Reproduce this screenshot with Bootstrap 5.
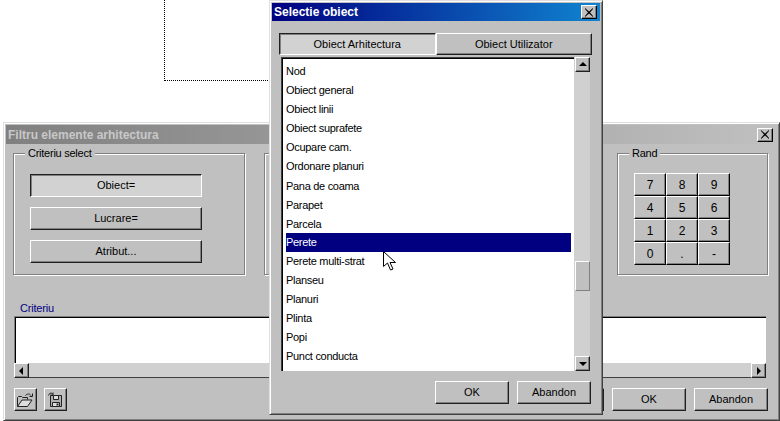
<!DOCTYPE html>
<html lang="en">
<head>
    <meta charset="UTF-8">
    <meta name="viewport" content="width=device-width, initial-scale=1.0">
    <title>Selectie obiect</title>
    <link href="https://cdn.jsdelivr.net/npm/bootstrap@5.3.0/dist/css/bootstrap.min.css" rel="stylesheet">
    <style>
    body {
        background: #fff;
        width: 780px;
        height: 421px;
        overflow: hidden;
        font-family: "Liberation Sans", Arial, sans-serif;
        font-size: 11px;
        color: #000;
    }
    .desk { width: 780px; height: 421px; }
    /* windows sit on a free canvas */
    .win {
        position: absolute;
        background: #c0c0c0;
        border: 1px solid;
        border-color: #dfdfdf #404040 #404040 #dfdfdf;
        box-shadow: inset 1px 1px 0 #fff, inset -1px -1px 0 #808080;
        padding: 2px;
    }
    .win-back { left: 3px; top: 122px; width: 777px; height: 299px; }
    .win-front { left: 269px; top: 0; width: 334px; height: 415px; }
    .dotted-box {
        position: absolute;
        left: 164px;
        top: -2px;
        width: 120px;
        height: 83px;
        border: 1px dotted #000;
    }
    .title-bar {
        height: 18px;
        padding: 0 3px 0 2px;
        font-size: 12px;
        font-weight: 700;
    }
    .win-back .title-bar { height: 19px; padding-right: 4px; background: linear-gradient(to right, #808080, #c0c0c0); color: #c8c8c8; }
    .win-front .title-bar { background: linear-gradient(to right, #000080, #1084d0); color: #fff; }
    .close-x {
        width: 16px;
        height: 14px;
        background: #c0c0c0;
        border: 1px solid;
        border-color: #fff #000 #000 #fff;
        box-shadow: inset -1px -1px 0 #808080;
    }
    .w-btn, .w-btn:hover, .w-btn:focus {
        border-radius: 0;
        padding: 0;
        font-family: "Liberation Sans", Arial, sans-serif;
        font-size: 11px;
        color: #000;
        background: #c0c0c0;
        border: 1px solid;
        border-color: #fff #202020 #202020 #fff;
        box-shadow: inset -1px -1px 0 #808080;
        height: 23px;
    }
    .w-btn.is-down {
        background: #d2d2d2;
        border-color: #202020 #fff #fff #202020;
        box-shadow: inset 1px 1px 0 #808080;
    }
    .btn-wide { width: 172px; }
    .btn-act { width: 74px; }
    .btn-ico { width: 23px; }
    .back-body { padding: 9px 8px 0 7px; }
    .grp {
        position: relative;
        height: 122px;
        border: 1px solid #808080;
        box-shadow: 1px 1px 0 #fff, inset 1px 1px 0 #fff;
    }
    .grp-sel { width: 232px; padding: 20px 0 0 16px; gap: 10px; }
    .grp-mid { width: 334px; margin-left: 19px; }
    .grp-rand { width: 151px; margin-left: auto; margin-right: 1px; padding: 19px 0 0 16px; }
    .grp-label {
        position: absolute;
        top: -8px;
        left: 11px;
        padding: 0 3px;
        background: #c0c0c0;
        font-size: 11px;
        line-height: 14px;
        letter-spacing: -.25px;
    }
    .keypad {
        display: grid;
        grid-template-columns: repeat(3, 32px);
        grid-auto-rows: 23px;
    }
    .keypad .w-btn { width: 32px; font-size: 12px; border-color: #fff #000 #000 #fff; }
    .crit-label { color: #000080; line-height: 14px; margin: 26px 0 1px 14px; font-size: 11px; letter-spacing: -.2px; }
    .crit-wrap { margin: 0 11px 0 8px; }
    .crit-box {
        height: 47px;
        background: #fff;
        border-top: 1px solid #808080;
        border-left: 1px solid #808080;
        box-shadow: inset 1px 1px 0 #000;
    }
    .sb-h { height: 15px; background: #d0d0d0; border-bottom: 1px solid #404040; }
    .sb-btn {
        width: 15px;
        height: 15px;
        background: #c0c0c0;
        border: 1px solid;
        border-color: #fff #202020 #202020 #fff;
        box-shadow: inset -1px -1px 0 #808080;
    }
    .back-foot { margin-top: 10px; padding: 0 9px 0 8px; gap: 7px; }
    .act-set { gap: 8px; }
    .front-body { padding: 12px 9px 0 7px; }
    .tab-row { margin-right: -1px; }
    .tab-row .w-btn { width: 157px; height: 22px; }
    .pick-wrap { margin: 2px 0 0 2px; height: 314px; }
    .pick-list {
        width: 293px;
        padding: 4px 3px 0 4px;
        border-radius: 0;
        overflow: hidden;
        background: #fff;
        border-top: 1px solid #404040;
        border-left: 1px solid #404040;
        box-shadow: inset 1px 1px 0 #000;
    }
    .pick-list .list-group-item {
        height: 19.1px;
        flex: none;
        padding: 0;
        line-height: 19px;
        border: 0;
        border-radius: 0;
        background: transparent;
        font-size: 11px;
        letter-spacing: -.3px;
        color: #000;
        white-space: nowrap;
    }
    .pick-list .list-group-item.active { background: #000080; color: #fff; }
    .sb-v { width: 16px; background: #d0d0d0; padding-left: 1px; }
    .sb-gap { height: 189px; }
    .sb-thumb {
        width: 15px;
        height: 30px;
        background: #c0c0c0;
        border: 1px solid;
        border-color: #fff #808080 #808080 #fff;
    }
    .front-foot { margin-top: 10px; }
    .arrow-pt {
        position: absolute;
        left: 383px;
        top: 251px;
    }
    </style>
</head>
<body>
<div class="desk position-relative">
    <div class="dotted-box"></div>

    <!-- back window -->
    <div class="win win-back d-flex flex-column">
        <div class="title-bar d-flex align-items-center justify-content-between">
            <span>Filtru elemente arhitectura</span>
            <span class="close-x d-flex align-items-center justify-content-center">
                <svg width="10" height="9" viewBox="0 0 10 9"><path d="M1 0l4 3.500L9 0v1L6 4.500 9 8v1L5 5.500 1 9V8l3-3.500L1 1z" fill="#000"/></svg>
            </span>
        </div>
        <div class="back-body d-flex">
            <div class="grp grp-sel d-flex flex-column">
                <span class="grp-label">Criteriu select</span>
                <button class="btn w-btn btn-wide is-down">Obiect=</button>
                <button class="btn w-btn btn-wide">Lucrare=</button>
                <button class="btn w-btn btn-wide">Atribut...</button>
            </div>
            <div class="grp grp-mid"></div>
            <div class="grp grp-rand">
                <span class="grp-label">Rand</span>
                <div class="keypad">
                    <button class="btn w-btn">7</button><button class="btn w-btn">8</button><button class="btn w-btn">9</button>
                    <button class="btn w-btn">4</button><button class="btn w-btn">5</button><button class="btn w-btn">6</button>
                    <button class="btn w-btn">1</button><button class="btn w-btn">2</button><button class="btn w-btn">3</button>
                    <button class="btn w-btn">0</button><button class="btn w-btn">.</button><button class="btn w-btn">-</button>
                </div>
            </div>
        </div>
        <div class="crit-label">Criteriu</div>
        <div class="crit-wrap">
            <div class="crit-box"></div>
            <div class="sb-h d-flex justify-content-between">
                <span class="sb-btn d-flex align-items-center justify-content-center">
                    <svg width="5" height="8" viewBox="0 0 5 8"><path d="M4 0v8L0 4z" fill="#000"/></svg>
                </span>
                <span class="sb-btn d-flex align-items-center justify-content-center">
                    <svg width="5" height="8" viewBox="0 0 5 8"><path d="M1 0v8l4-4z" fill="#000"/></svg>
                </span>
            </div>
        </div>
        <div class="back-foot d-flex align-items-center">
            <button class="btn w-btn btn-ico d-flex align-items-center justify-content-center">
                <svg width="17" height="14" viewBox="0 0 17 14" fill="none" stroke="#222">
                    <path d="M.500 13.500V4.500l1-1h3l1 1h5v2"/>
                    <path d="M.500 13.500h10l4.500-6.500H5z" fill="#dedede"/>
                    <path d="M8.500 2.500c2-2 4-2 5.500 0M15.500 .5v3H12.500"/>
                </svg>
            </button>
            <button class="btn w-btn btn-ico d-flex align-items-center justify-content-center">
                <svg width="15" height="16" viewBox="0 0 15 16" fill="none" stroke="#222">
                    <path d="M.500 3.500c.5-2 2-3 4-2M5 .5v2.500H2.500"/>
                    <path d="M2.500 3.500h11v11h-11z" fill="#b0b0b0"/>
                    <path d="M5.500 3.500h5v4h-5z" fill="#dedede"/>
                    <path d="M4.500 14.500v-4h7v4z" fill="#dedede"/>
                    <path d="M9.500 11.500v2" stroke-width="2"/>
                </svg>
            </button>
            <div class="act-set ms-auto d-flex">
                <button class="btn w-btn btn-act"></button>
                <button class="btn w-btn btn-act">OK</button>
                <button class="btn w-btn btn-act">Abandon</button>
            </div>
        </div>
    </div>

    <!-- front dialog -->
    <div class="win win-front d-flex flex-column">
        <div class="title-bar d-flex align-items-center justify-content-between">
            <span>Selectie obiect</span>
            <span class="close-x d-flex align-items-center justify-content-center">
                <svg width="10" height="9" viewBox="0 0 10 9"><path d="M1 0l4 3.500L9 0v1L6 4.500 9 8v1L5 5.500 1 9V8l3-3.500L1 1z" fill="#000"/></svg>
            </span>
        </div>
        <div class="front-body d-flex flex-column">
            <div class="tab-row d-flex">
                <button class="btn w-btn is-down">Obiect Arhitectura</button>
                <button class="btn w-btn">Obiect Utilizator</button>
            </div>
            <div class="pick-wrap d-flex">
                <ul class="list-group pick-list">
                    <li class="list-group-item">Nod</li>
                    <li class="list-group-item">Obiect general</li>
                    <li class="list-group-item">Obiect linii</li>
                    <li class="list-group-item">Obiect suprafete</li>
                    <li class="list-group-item">Ocupare cam.</li>
                    <li class="list-group-item">Ordonare planuri</li>
                    <li class="list-group-item">Pana de coama</li>
                    <li class="list-group-item">Parapet</li>
                    <li class="list-group-item">Parcela</li>
                    <li class="list-group-item active">Perete</li>
                    <li class="list-group-item">Perete multi-strat</li>
                    <li class="list-group-item">Planseu</li>
                    <li class="list-group-item">Planuri</li>
                    <li class="list-group-item">Plinta</li>
                    <li class="list-group-item">Popi</li>
                    <li class="list-group-item">Punct conducta</li>
                </ul>
                <div class="sb-v d-flex flex-column">
                    <span class="sb-btn d-flex align-items-center justify-content-center">
                        <svg width="8" height="5" viewBox="0 0 8 5"><path d="M0 4h8L4 0z" fill="#000"/></svg>
                    </span>
                    <div class="sb-gap"></div>
                    <div class="sb-thumb"></div>
                    <span class="sb-btn d-flex align-items-center justify-content-center mt-auto">
                        <svg width="8" height="5" viewBox="0 0 8 5"><path d="M0 1h8L4 5z" fill="#000"/></svg>
                    </span>
                </div>
            </div>
            <div class="front-foot act-set d-flex justify-content-end">
                <button class="btn w-btn btn-act">OK</button>
                <button class="btn w-btn btn-act">Abandon</button>
            </div>
        </div>
    </div>

    <!-- mouse pointer -->
    <svg class="arrow-pt" width="14" height="21" viewBox="0 0 14 21">
        <path d="M.500.500v15l4-3.500 3 7 2.500-1-3-6.500h5.500z" fill="#fff" stroke="#000"/>
    </svg>
</div>
<script src="https://cdn.jsdelivr.net/npm/bootstrap@5.3.0/dist/js/bootstrap.bundle.min.js"></script>
</body>
</html>
